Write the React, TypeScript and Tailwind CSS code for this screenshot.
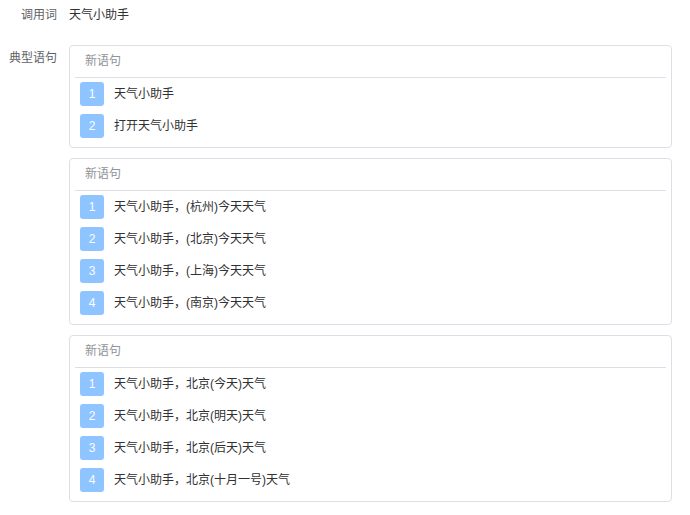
const groups: string[][] = [
  ["天气小助手", "打开天气小助手"],
  [
    "天气小助手，(杭州)今天天气",
    "天气小助手，(北京)今天天气",
    "天气小助手，(上海)今天天气",
    "天气小助手，(南京)今天天气",
  ],
  [
    "天气小助手，北京(今天)天气",
    "天气小助手，北京(明天)天气",
    "天气小助手，北京(后天)天气",
    "天气小助手，北京(十月一号)天气",
  ],
];

function SentenceCard({ items }: { items: string[] }) {
  return (
    <div className="mb-[10px] rounded border border-[#dcdfe6] bg-white px-[5px] pb-[5px]">
      <div className="h-[32px] border-b border-[#dcdfe6] pl-[10px] leading-[31px] text-[#909399]">
        新语句
      </div>
      {items.map((text, i) => (
        <div key={i} className="flex h-[32px] items-center pl-[5px]">
          <span className="flex h-[24px] w-[24px] items-center justify-center rounded-[3px] bg-[#8ec4ff] text-white">
            {i + 1}
          </span>
          <span className="ml-[10px] text-[#303133]">{text}</span>
        </div>
      ))}
    </div>
  );
}

export default function App() {
  return (
    <div
      className="min-h-[515px] w-[690px] bg-white text-[12px]"
      style={{ fontFamily: '"Liberation Sans", "Noto Sans CJK SC", sans-serif' }}
    >
      <div className="flex h-[30px] items-center">
        <div className="w-[69px] pr-[12px] text-right text-[#606266]">调用词</div>
        <div className="text-[#303133]">天气小助手</div>
      </div>
      <div className="mt-[15px] flex">
        <div className="w-[69px] shrink-0 pr-[12px] text-right leading-[26px] text-[#606266]">
          典型语句
        </div>
        <div className="w-[603px]">
          {groups.map((g, i) => (
            <SentenceCard key={i} items={g} />
          ))}
        </div>
      </div>
    </div>
  );
}
